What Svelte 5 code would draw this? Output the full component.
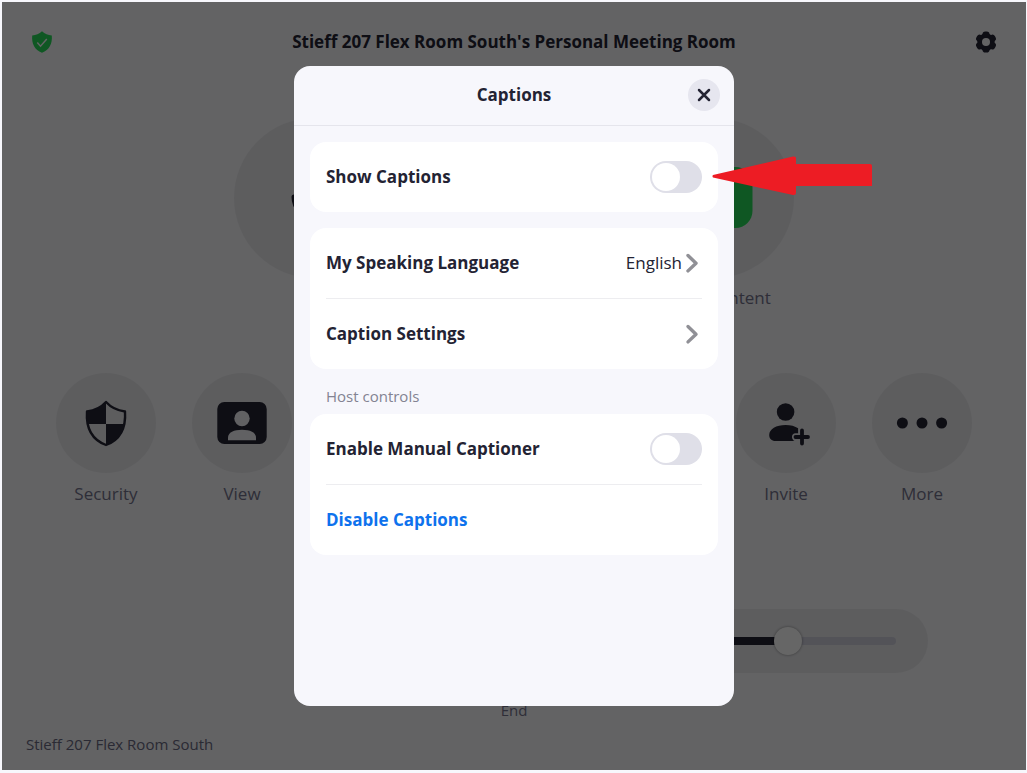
<script>
  const room = 'Stieff 207 Flex Room South';

  const actions = [
    { id: 'audio', label: 'Mute' },
    { id: 'video', label: 'Stop Video' },
    { id: 'share', label: 'Share Content' }
  ];

  const tools = [
    { id: 'security', label: 'Security' },
    { id: 'view', label: 'View' },
    { id: 'camera', label: 'Camera' },
    { id: 'participants', label: 'People' },
    { id: 'record', label: 'Record' },
    { id: 'invite', label: 'Invite' },
    { id: 'more', label: 'More' }
  ];

  let volume = $state(79);
  let showCaptions = $state(false);
  let manualCaptioner = $state(false);
  let open = $state(true);
</script>

{#snippet chevron()}
  <svg class="chevron" width="20" height="24" viewBox="0 0 20 24" aria-hidden="true">
    <path d="M6 4.500l8 7.700-8 7.700" fill="none" stroke="#909096" stroke-width="3.400" stroke-linecap="round" stroke-linejoin="round" />
  </svg>
{/snippet}

{#snippet icon(id)}
  {#if id === 'audio'}
    <svg width="80" height="80" viewBox="0 0 80 80" aria-hidden="true">
      <rect x="29" y="6" width="22" height="44" rx="11" fill="#232333" />
      <path d="M20 39a20 20 0 0 0 40 0M40 60v12M28 73h24" fill="none" stroke="#232333" stroke-width="5" stroke-linecap="round" />
    </svg>
  {:else if id === 'video'}
    <svg width="80" height="80" viewBox="0 0 80 80" aria-hidden="true">
      <rect x="8" y="20" width="44" height="40" rx="8" fill="#232333" />
      <path d="M56 34l16-10v32L56 46z" fill="#232333" />
    </svg>
  {:else if id === 'share'}
    <svg width="80" height="80" viewBox="0 0 80 80" aria-hidden="true">
      <rect x="2" y="9" width="76.500" height="61" rx="17" fill="#26da58" />
      <path d="M40 56V26M27 38l13-13 13 13" fill="none" stroke="#fff" stroke-width="6" stroke-linecap="round" stroke-linejoin="round" />
    </svg>
  {:else if id === 'security'}
    <svg width="52" height="52" viewBox="0 0 52 52" aria-hidden="true">
      <path d="M26 5c5 5.500 11 8.500 19 9.500 1 15-3 27.500-19 33.500C10 42 6 29.500 7 14.500c8-1 14-4 19-9.500z" fill="none" stroke="#232333" stroke-width="2.400" stroke-linejoin="round" />
      <path d="M26 5v22H7.500C6.500 23 6.700 19 7 14.500c8-1 14-4 19-9.500zM26 27h18.500C43 37 37 44 26 48z" fill="#232333" />
    </svg>
  {:else if id === 'view'}
    <svg width="52" height="52" viewBox="0 0 52 52" aria-hidden="true">
      <rect x="1.300" y="5" width="49.400" height="42" rx="7" fill="#232333" />
      <circle cx="26" cy="21.500" r="7.700" fill="#f2f2f7" />
      <path d="M12 43.300v-2.800c0-5 6-7.700 14-7.700s14 2.700 14 7.700v2.800z" fill="#f2f2f7" />
    </svg>
  {:else if id === 'invite'}
    <svg width="52" height="52" viewBox="0 0 52 52" aria-hidden="true">
      <circle cx="25.600" cy="15" r="8.800" fill="#232333" />
      <path d="M15.500 44c-4 0-6.300-2.500-6.300-6 0-6 7-10 16.400-10 5 0 9.500 1.200 12.500 3.300v5h-2.600c-4.500 0-4.500 6.200-1 7.700z" fill="#232333" />
      <path d="M42 33.500v13M35.500 40H48" fill="none" stroke="#232333" stroke-width="3.800" stroke-linecap="round" />
    </svg>
  {:else if id === 'more'}
    <svg width="52" height="52" viewBox="0 0 52 52" aria-hidden="true">
      <circle cx="6.400" cy="26" r="5.500" fill="#232333" />
      <circle cx="26" cy="26" r="5.500" fill="#232333" />
      <circle cx="45.600" cy="26" r="5.500" fill="#232333" />
    </svg>
  {:else}
    <svg width="52" height="52" viewBox="0 0 52 52" aria-hidden="true">
      <circle cx="26" cy="26" r="18" fill="none" stroke="#232333" stroke-width="4" />
    </svg>
  {/if}
{/snippet}

<div class="frame">
  <header class="topbar">
    <svg width="24" height="24" viewBox="0 0 24 24" aria-label="Encrypted" role="img">
      <path d="M12 1.200c2.800 2.700 6 3.900 9.800 4.300C22.500 13.500 19.500 20 12 22.800 4.500 20 1.500 13.500 2.200 5.500 6 5.100 9.200 3.900 12 1.200z" fill="#26da58" />
      <path d="M7.300 12.500l3.200 3.700 6.300-7.200" fill="none" stroke="#f7f7fa" stroke-width="1.500" />
    </svg>
    <h1>{room}'s Personal Meeting Room</h1>
    <button class="plain" aria-label="Settings">
      <svg width="24" height="24" viewBox="0 0 24 24" aria-hidden="true">
        <g fill="#232333">
          <circle cx="12" cy="12" r="8.700" />
          {#each [0, 60, 120, 180, 240, 300] as angle}
            <rect x="8.500" y="1.400" width="7" height="7" rx="2.800" transform="rotate({angle} 12 12)" />
          {/each}
        </g>
        <circle cx="12" cy="12" r="4" fill="#f7f7fa" />
      </svg>
    </button>
  </header>

  <main>
    <div class="actions">
      {#each actions as action}
        <button class="action">
          <span class="disc big">{@render icon(action.id)}</span>
          <span>{action.label}</span>
        </button>
      {/each}
    </div>

    <div class="tools">
      {#each tools as tool}
        <button class="tool">
          <span class="disc">{@render icon(tool.id)}</span>
          <span>{tool.label}</span>
        </button>
      {/each}
    </div>

    <div class="controls">
      <div class="volume">
        <svg width="34" height="34" viewBox="0 0 34 34" aria-hidden="true">
          <path d="M4 12h7l9-7v24l-9-7H4z" fill="#232333" />
        </svg>
        <input
          type="range"
          aria-label="Speaker volume"
          min="0"
          max="100"
          bind:value={volume}
          style="--fill: {volume}%"
        />
      </div>
    </div>

    <button class="plain end">End</button>
  </main>

  <footer>{room}</footer>

  {#if open}
    <div class="overlay">
      <div class="dialog" role="dialog" aria-labelledby="captions-title">
        <div class="dialog-head">
          <h2 id="captions-title">Captions</h2>
          <button class="close" aria-label="Close" onclick={() => (open = false)}>
            <svg width="16" height="16" viewBox="0 0 16 16" aria-hidden="true">
              <path d="M3 3l10 10M13 3L3 13" stroke="#232333" stroke-width="2.500" stroke-linecap="round" />
            </svg>
          </button>
        </div>

        <div class="dialog-body">
          <div class="card">
            <label class="row">
              <span>Show Captions</span>
              <input type="checkbox" role="switch" bind:checked={showCaptions} />
            </label>
          </div>

          <div class="card">
            <button class="row">
              <span>My Speaking Language</span>
              <span class="value">English {@render chevron()}</span>
            </button>
            <button class="row">
              <span>Caption Settings</span>
              <span class="value">{@render chevron()}</span>
            </button>
          </div>

          <section>
            <h3>Host controls</h3>
            <div class="card">
              <label class="row">
                <span>Enable Manual Captioner</span>
                <input type="checkbox" role="switch" bind:checked={manualCaptioner} />
              </label>
              <button class="row link">Disable Captions</button>
            </div>
          </section>
        </div>

        <svg class="pointer" width="160" height="40" viewBox="0 0 160 40" aria-hidden="true">
          <path d="M1 19L81 0.500Q84 0 84 2V8H158Q160 8 160 10V30H84V37Q84 39.500 81 39L1 21.500Q0 20 1 19z" fill="#ed1c24" />
        </svg>
      </div>
    </div>
  {/if}
</div>

<style>
  :global(body) {
    margin: 0;
  }

  .frame {
    position: relative;
    box-sizing: border-box;
    min-height: 100vh;
    display: flex;
    flex-direction: column;
    border: 2px solid #f7f7fc;
    border-right-width: 1px;
    border-bottom-width: 3px;
    background: #f7f7fa;
    color: #232333;
    font-family: 'Open Sans', 'Noto Sans', sans-serif;
    font-size: 17px;
    line-height: 24px;
  }

  button {
    padding: 0;
    border: 0;
    background: none;
    color: inherit;
    font: inherit;
    cursor: pointer;
  }

  svg {
    display: block;
  }

  h1,
  h2,
  h3 {
    margin: 0;
    font-size: 17px;
    font-weight: 700;
  }

  .topbar {
    display: flex;
    align-items: center;
    justify-content: space-between;
    height: 80px;
    padding: 0 28px;
  }

  main {
    display: flex;
    flex-direction: column;
    align-items: center;
    padding-top: 36px;
    color: #74748c;
  }

  .actions,
  .tools {
    display: flex;
    justify-content: center;
  }

  .actions {
    gap: 40px;
    margin-bottom: 63px;
  }

  .tools {
    margin-bottom: 103px;
  }

  .action,
  .tool {
    display: flex;
    flex-direction: column;
    align-items: center;
    gap: 8px;
  }

  .action {
    width: 160px;
  }

  .tool {
    width: 136px;
    gap: 9px;
  }

  .disc {
    display: flex;
    align-items: center;
    justify-content: center;
    width: 100px;
    height: 100px;
    border-radius: 50%;
    background: #e9e9ec;
  }

  .disc.big {
    width: 160px;
    height: 160px;
  }

  .controls {
    display: flex;
    justify-content: flex-end;
    width: 100%;
    max-width: 828px;
  }

  .volume {
    display: flex;
    align-items: center;
    gap: 24px;
    box-sizing: border-box;
    width: 600px;
    height: 64px;
    padding: 0 32px;
    border-radius: 32px;
    background: #e9e9ec;
  }

  .volume input {
    flex: 1;
    height: 28px;
    margin: 0;
    background: none;
    appearance: none;
  }

  .volume input::-webkit-slider-runnable-track {
    height: 8px;
    border-radius: 4px;
    background: linear-gradient(to right, #232333 var(--fill), #cfcfdd var(--fill));
  }

  .volume input::-webkit-slider-thumb {
    width: 28px;
    height: 28px;
    margin-top: -10px;
    border-radius: 50%;
    background: #fff;
    box-shadow: 0 0 3px rgba(0, 0, 0, 0.4);
    appearance: none;
  }

  .end {
    margin-top: 25px;
    font-size: 15px;
  }

  footer {
    margin-top: auto;
    padding: 0 24px 14px;
    color: #6a6a82;
    font-size: 15px;
  }

  .overlay {
    position: absolute;
    inset: 0;
    display: flex;
    align-items: center;
    justify-content: center;
    background: rgba(0, 0, 0, 0.6);
  }

  .dialog {
    position: relative;
    width: 440px;
    min-height: 640px;
    border-radius: 16px;
    background: #f7f7fc;
  }

  .dialog-head {
    display: grid;
    grid-template-columns: 32px 1fr 32px;
    align-items: center;
    height: 58px;
    padding: 0 14px 1px;
    border-bottom: 1px solid #e5e5ec;
    text-align: center;
  }

  .dialog-head h2 {
    grid-column: 2;
  }

  .close {
    display: flex;
    align-items: center;
    justify-content: center;
    width: 32px;
    height: 32px;
    border-radius: 50%;
    background: #e6e6ef;
  }

  .dialog-body {
    display: flex;
    flex-direction: column;
    gap: 16px;
    padding: 16px;
  }

  .card {
    padding: 0 16px;
    border-radius: 16px;
    background: #fff;
  }

  .row {
    display: flex;
    align-items: center;
    justify-content: space-between;
    width: 100%;
    height: 70px;
    font-weight: 700;
    text-align: left;
    cursor: pointer;
  }

  .row + .row {
    box-sizing: content-box;
    border-top: 1px solid #ededf0;
  }

  .row.link {
    color: #0e72ed;
  }

  .value {
    display: flex;
    align-items: center;
    font-weight: 400;
  }

  h3 {
    padding: 0 16px 7px;
    color: #838392;
    font-size: 15px;
    font-weight: 400;
    line-height: 22px;
  }

  .row input {
    box-sizing: border-box;
    width: 52px;
    height: 32px;
    margin: 0;
    padding: 2px;
    border-radius: 16px;
    background: #dfdfe8;
    appearance: none;
    cursor: pointer;
  }

  .row input::before {
    content: '';
    display: block;
    width: 28px;
    height: 28px;
    border-radius: 50%;
    background: #fff;
  }

  .row input:checked {
    background: #0e72ed;
  }

  .row input:checked::before {
    margin-left: 20px;
  }

  .pointer {
    position: absolute;
    top: 90px;
    left: 418px;
  }
</style>
